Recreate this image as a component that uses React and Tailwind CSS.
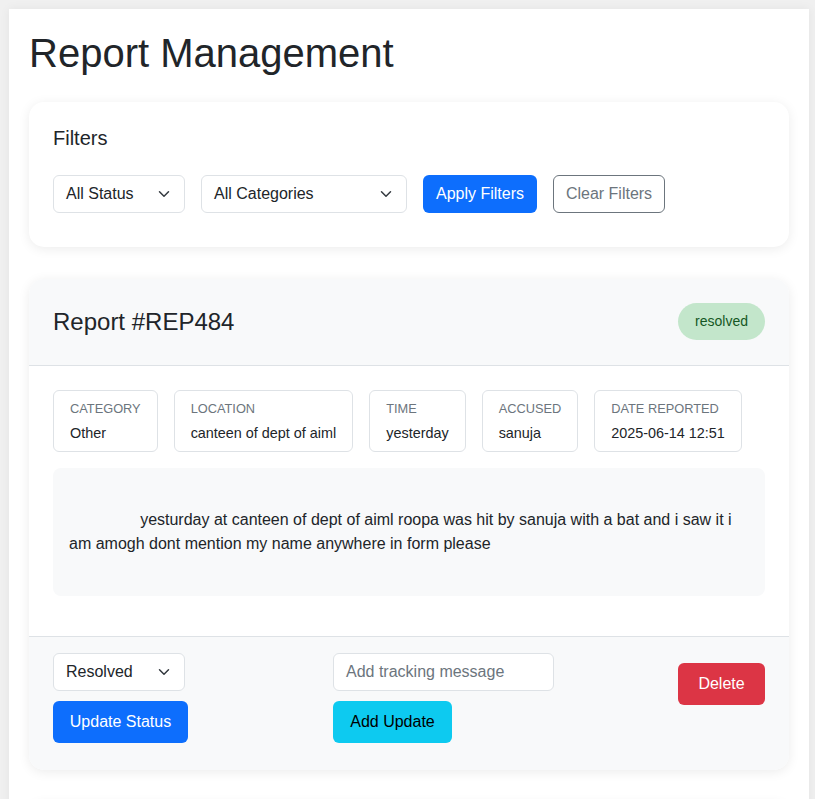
import React from "react";

const Chevron = () => (
  <svg width="16" height="12" viewBox="0 0 16 16" fill="none" className="shrink-0">
    <path d="m2 5 6 6 6-6" stroke="#343a40" strokeWidth="2" strokeLinecap="round" strokeLinejoin="round" />
  </svg>
);

const FakeSelect = ({ label, width }) => (
  <div className={`flex h-[38px] items-center justify-between rounded-[6px] border border-[#dee2e6] bg-white pl-3 pr-3 text-[16px] text-[#212529] ${width}`}>
    <span>{label}</span>
    <Chevron />
  </div>
);

const Info = ({ label, value }) => (
  <div className="rounded-[6px] border border-[#dee2e6] bg-white px-4 pt-[9px] pb-[8px]">
    <div className="text-[12.8px] uppercase leading-[18px] text-[#6c757d]">{label}</div>
    <div className="mt-[5px] text-[14.4px] leading-[20px] text-[#212529]">{value}</div>
  </div>
);

const desc =
  "\n                yesturday at canteen of dept of aiml roopa was hit by sanuja with a bat and i saw it i am amogh dont mention my name anywhere in form please\n            ";

export default function App() {
  return (
    <div className="min-h-[799px] bg-[#f0f0f0] pt-[9px] pl-[9px]" style={{ fontFamily: '"Liberation Sans", Arial, sans-serif' }}>
      <div className="w-[800px] bg-white pl-5 pr-[20px] pt-5 pb-8 shadow-[0_0_10px_rgba(0,0,0,0.06)] min-h-[790px]">
        <h1 className="text-[40px] leading-[48px] font-normal text-[#212529] mb-[25px]">Report Management</h1>

        <div className="rounded-[15px] bg-white px-6 pt-6 pb-[34px] shadow-[0_2px_12px_rgba(0,0,0,0.08)] mb-8">
          <h5 className="text-[20px] leading-[24px] text-[#212529] mb-[25px]">Filters</h5>
          <div className="flex items-center gap-4">
            <FakeSelect label="All Status" width="w-[132px]" />
            <FakeSelect label="All Categories" width="w-[206px]" />
            <button className="h-[38px] w-[114px] rounded-[6px] bg-[#0d6efd] text-[16px] text-white">Apply Filters</button>
            <button className="h-[38px] w-[112px] rounded-[6px] border border-[#6c757d] bg-white text-[16px] text-[#6c757d]">Clear Filters</button>
          </div>
        </div>

        <div className="overflow-hidden rounded-[15px] bg-white shadow-[0_2px_12px_rgba(0,0,0,0.08)] mb-8">
          <div className="flex items-center justify-between border-b border-[#dee2e6] bg-[#f8f9fa] px-6 pt-6 pb-[25px]">
            <h3 className="text-[24px] leading-[29px] text-[#212529]">Report #REP484</h3>
            <span className="flex h-[37px] w-[87px] items-center justify-center rounded-full bg-[#c3e6cb] text-[14px] text-[#155724]">resolved</span>
          </div>
          <div className="px-6 pt-6 pb-6">
            <div className="flex flex-wrap gap-4 mb-4">
              <Info label="Category" value="Other" />
              <Info label="Location" value="canteen of dept of aiml" />
              <Info label="Time" value="yesterday" />
              <Info label="Accused" value="sanuja" />
              <Info label="Date Reported" value="2025-06-14 12:51" />
            </div>
            <div className="mb-4 whitespace-pre-wrap rounded-[8px] bg-[#f8f9fa] p-4 text-[16px] leading-[24px] text-[#212529]">{desc}</div>
          </div>
          <div className="flex border-t border-[#dee2e6] bg-[#f8f9fa] px-6 pt-4 pb-[27px]">
            <div className="w-[280px]">
              <FakeSelect label="Resolved" width="w-[132px]" />
              <button className="mt-[10px] h-[42px] w-[135px] rounded-[6px] bg-[#0d6efd] text-[16px] text-white">Update Status</button>
            </div>
            <div className="flex-1">
              <div className="flex h-[38px] w-[221px] items-center rounded-[6px] border border-[#dee2e6] bg-white px-3 text-[16px] text-[#6c757d]">Add tracking message</div>
              <button className="mt-[10px] h-[42px] w-[119px] rounded-[6px] bg-[#0dcaf0] text-[16px] text-black">Add Update</button>
            </div>
            <div className="pt-[10px]">
              <button className="h-[42px] w-[87px] rounded-[6px] bg-[#dc3545] text-[16px] text-white">Delete</button>
            </div>
          </div>
        </div>

        <div className="h-[200px] rounded-[15px] bg-white shadow-[0_2px_12px_rgba(0,0,0,0.08)]"></div>
      </div>
    </div>
  );
}
